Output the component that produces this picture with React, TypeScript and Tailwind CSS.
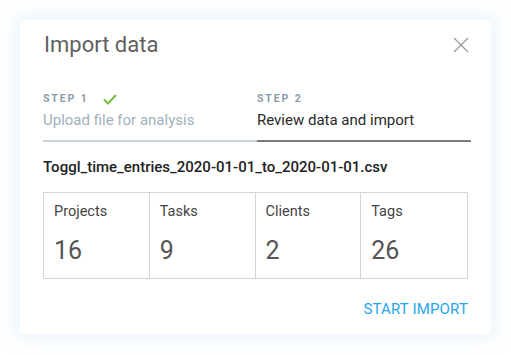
import React from 'react';

const stats = [
  { label: 'Projects', value: 16 },
  { label: 'Tasks', value: 9 },
  { label: 'Clients', value: 2 },
  { label: 'Tags', value: 26 },
];

const App: React.FC = () => {
  return (
    <div className="w-[511px] h-[355px] bg-white pt-[20px] pl-[20px] font-['Roboto',_sans-serif]">
      <div className="w-[471px] h-[314px] bg-white rounded-[5px] shadow-[0_0_18px_6px_rgba(200,225,245,0.35)] pl-[23px] pr-[20px] pt-[10px]">
        {/* Header */}
        <div className="flex items-center justify-between h-[30px]">
          <h1 className="text-[22px] text-[#5f5f5f] font-normal leading-none ml-[1px]">Import data</h1>
          <button className="mr-[2px] text-[#9a9a9a]">
            <svg width="16" height="16" viewBox="0 0 16 16" fill="none" stroke="currentColor" strokeWidth="1.3">
              <path d="M1 1l14 14M15 1L1 15" />
            </svg>
          </button>
        </div>

        {/* Stepper */}
        <div className="flex mt-[32px]">
          <div className="w-[214px] border-b-2 border-[#c8d3da]">
            <div className="flex items-center gap-[14px] h-[14px]">
              <span className="text-[10.5px] font-bold tracking-[0.18em] text-[#8a9ba8]">STEP 1</span>
              <svg width="14" height="11" viewBox="0 0 14 11" fill="none" stroke="#78bf3f" strokeWidth="2">
                <path d="M1 5.5l4 4L13 1" />
              </svg>
            </div>
            <div className="text-[15px] text-[#a0b1bc] mt-[4px] pb-[10px] leading-[20px]">Upload file for analysis</div>
          </div>
          <div className="w-[214px] border-b-2 border-[#7a7a7a]">
            <div className="flex items-center h-[14px]">
              <span className="text-[10.5px] font-bold tracking-[0.18em] text-[#8a9ba8]">STEP 2</span>
            </div>
            <div className="text-[15px] text-[#2a2a2a] mt-[4px] pb-[10px] leading-[20px]">Review data and import</div>
          </div>
        </div>

        {/* File name */}
        <div className="mt-[15px] text-[15px] font-medium text-[#222] leading-[20px]">
          Toggl_time_entries_2020-01-01_to_2020-01-01.csv
        </div>

        {/* Stats */}
        <div className="mt-[15px] w-[425px] grid grid-cols-4 border border-[#cfd7de]">
          {stats.map((s, i) => (
            <div
              key={s.label}
              className={`h-[85px] pl-[10px] pt-[9px] ${i < 3 ? 'border-r border-[#cfd7de]' : ''}`}
            >
              <div className="text-[14.5px] text-[#444] leading-[20px]">{s.label}</div>
              <div className="mt-[14px] text-[25px] text-[#555] leading-[30px]">{s.value}</div>
            </div>
          ))}
        </div>

        {/* Footer */}
        <div className="flex justify-end w-[425px] mt-[20px]">
          <button className="text-[15px] text-[#1fa6ee] leading-[20px] tracking-[0.01em]">START IMPORT</button>
        </div>
      </div>
    </div>
  );
};

export default App;
